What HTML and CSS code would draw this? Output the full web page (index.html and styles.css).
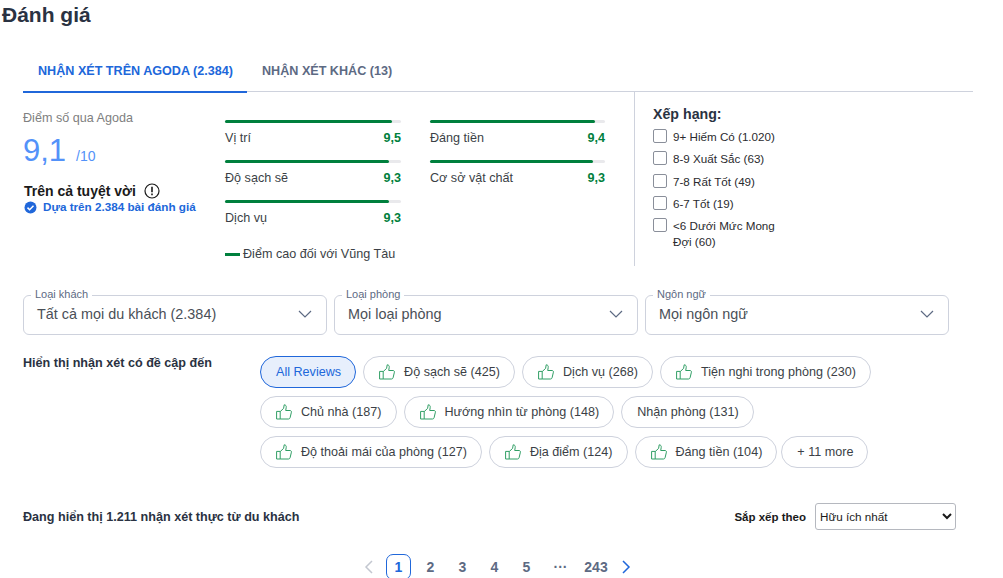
FILE: index.html
```html
<!DOCTYPE html>
<html lang="vi">
<head>
    <meta charset="UTF-8">
    <meta name="viewport" content="width=device-width, initial-scale=1.0">
    <title>Đánh giá</title>
    <link rel="stylesheet" href="styles.css">
</head>
<body>
    <svg class="icon-defs" width="0" height="0">
        <symbol id="thumb" viewBox="0 0 16 16">
            <path d="M.6 7.4h3.6v7.6H.6zM4.2 7.6 7.6 4.4 8.2.8c1.600 0 2.300 1.300 2 2.800L9.700 6.500h4.300c1 0 1.600.8 1.400 1.700l-1.300 5.500c-.2.800-.8 1.300-1.600 1.300H4.200" fill="none" stroke="currentColor" stroke-width="1" stroke-linejoin="round"/>
        </symbol>
        <symbol id="chevron" viewBox="0 0 14 8">
            <path d="M1 1l6 6 6-6" fill="none" stroke="currentColor" stroke-width="1.200"/>
        </symbol>
    </svg>

    <h1 class="page-title">Đánh giá</h1>

    <div class="content">
        <!-- tabs -->
        <div class="tabs">
            <div class="tab active">NHẬN XÉT TRÊN AGODA (2.384)</div>
            <div class="tab">NHẬN XÉT KHÁC (13)</div>
        </div>

        <!-- score summary -->
        <div class="summary">
            <div class="overall">
                <div class="overall-label">Điểm số qua Agoda</div>
                <div class="overall-score">9,1<span class="overall-max">/10</span></div>
                <div class="overall-text">Trên cả tuyệt vời
                    <svg class="info-icon" width="16" height="16" viewBox="0 0 16 16">
                        <circle cx="8" cy="8" r="7" fill="none" stroke="#1a1a1a" stroke-width="1.200"/>
                        <path d="M8 3.800v5.400M8 10.600v1.600" stroke="#1a1a1a" stroke-width="1.600"/>
                    </svg>
                </div>
                <div class="overall-based">
                    <svg width="13" height="13" viewBox="0 0 13 13">
                        <circle cx="6.500" cy="6.500" r="6" fill="#2067da"/>
                        <path d="M3.500 6.600l2.100 2.100 3.900-3.900" fill="none" stroke="#fff" stroke-width="1.500"/>
                    </svg>
                    Dựa trên 2.384 bài đánh giá
                </div>
            </div>

            <div class="bars">
                <div class="bar-col">
                    <div class="bar-item">
                        <div class="bar-track"><div class="bar-fill" style="width: 95%"></div></div>
                        <div class="bar-row"><span>Vị trí</span><span class="bar-value">9,5</span></div>
                    </div>
                    <div class="bar-item">
                        <div class="bar-track"><div class="bar-fill" style="width: 93%"></div></div>
                        <div class="bar-row"><span>Độ sạch sẽ</span><span class="bar-value">9,3</span></div>
                    </div>
                    <div class="bar-item">
                        <div class="bar-track"><div class="bar-fill" style="width: 93%"></div></div>
                        <div class="bar-row"><span>Dịch vụ</span><span class="bar-value">9,3</span></div>
                    </div>
                    <div class="legend"><span class="legend-line"></span>Điểm cao đối với Vũng Tàu</div>
                </div>
                <div class="bar-col">
                    <div class="bar-item">
                        <div class="bar-track"><div class="bar-fill" style="width: 94%"></div></div>
                        <div class="bar-row"><span>Đáng tiền</span><span class="bar-value">9,4</span></div>
                    </div>
                    <div class="bar-item">
                        <div class="bar-track"><div class="bar-fill" style="width: 93%"></div></div>
                        <div class="bar-row"><span>Cơ sở vật chất</span><span class="bar-value">9,3</span></div>
                    </div>
                </div>
            </div>

            <div class="rating-filter">
                <div class="rating-title">Xếp hạng:</div>
                <label class="rating-option"><span class="checkbox"></span><span>9+ Hiếm Có (1.020)</span></label>
                <label class="rating-option"><span class="checkbox"></span><span>8-9 Xuất Sắc (63)</span></label>
                <label class="rating-option"><span class="checkbox"></span><span>7-8 Rất Tốt (49)</span></label>
                <label class="rating-option"><span class="checkbox"></span><span>6-7 Tốt (19)</span></label>
                <label class="rating-option"><span class="checkbox"></span><span>&lt;6 Dưới Mức Mong Đợi (60)</span></label>
            </div>
        </div>

        <!-- dropdown filters -->
        <div class="dropdowns">
            <div class="dropdown">
                <span class="dropdown-label">Loại khách</span>
                <span>Tất cả mọi du khách (2.384)</span>
                <svg class="dropdown-arrow" width="14" height="8"><use href="#chevron"/></svg>
            </div>
            <div class="dropdown">
                <span class="dropdown-label">Loại phòng</span>
                <span>Mọi loại phòng</span>
                <svg class="dropdown-arrow" width="14" height="8"><use href="#chevron"/></svg>
            </div>
            <div class="dropdown">
                <span class="dropdown-label">Ngôn ngữ</span>
                <span>Mọi ngôn ngữ</span>
                <svg class="dropdown-arrow" width="14" height="8"><use href="#chevron"/></svg>
            </div>
        </div>

        <!-- mentions -->
        <div class="mentions">
            <div class="mentions-title">Hiển thị nhận xét có đề cập đến</div>
            <div class="chips">
                <div class="chip selected">All Reviews</div>
                <div class="chip"><svg class="thumb" width="16" height="16"><use href="#thumb"/></svg>Độ sạch sẽ (425)</div>
                <div class="chip"><svg class="thumb" width="16" height="16"><use href="#thumb"/></svg>Dịch vụ (268)</div>
                <div class="chip"><svg class="thumb" width="16" height="16"><use href="#thumb"/></svg>Tiện nghi trong phòng (230)</div>
                <div class="chip"><svg class="thumb" width="16" height="16"><use href="#thumb"/></svg>Chủ nhà (187)</div>
                <div class="chip"><svg class="thumb" width="16" height="16"><use href="#thumb"/></svg>Hướng nhìn từ phòng (148)</div>
                <div class="chip">Nhận phòng (131)</div>
                <div class="chip"><svg class="thumb" width="16" height="16"><use href="#thumb"/></svg>Độ thoải mái của phòng (127)</div>
                <div class="chip"><svg class="thumb" width="16" height="16"><use href="#thumb"/></svg>Địa điểm (124)</div>
                <div class="chip"><svg class="thumb" width="16" height="16"><use href="#thumb"/></svg>Đáng tiền (104)</div>
                <div class="chip more">+ 11 more</div>
            </div>
        </div>

        <!-- count and sort -->
        <div class="result-bar">
            <div class="result-count">Đang hiển thị 1.211 nhận xét thực từ du khách</div>
            <div class="sort">
                <span class="sort-label">Sắp xếp theo</span>
                <select class="sort-select">
                    <option>Hữu ích nhất</option>
                </select>
            </div>
        </div>

        <!-- pagination -->
        <div class="pagination">
            <svg class="page-arrow prev" width="9" height="14" viewBox="0 0 9 14"><path d="M8 1L2 7l6 6" fill="none" stroke="#c3c7d0" stroke-width="1.500"/></svg>
            <span class="page current">1</span>
            <span class="page">2</span>
            <span class="page">3</span>
            <span class="page">4</span>
            <span class="page">5</span>
            <span class="page dots">···</span>
            <span class="page wide">243</span>
            <svg class="page-arrow next" width="9" height="14" viewBox="0 0 9 14"><path d="M1 1l6 6-6 6" fill="none" stroke="#2067da" stroke-width="1.500"/></svg>
        </div>
    </div>
</body>
</html>
```

FILE: styles.css
```css
/* base */
html, body {
    height: 100%;
    overflow: hidden;
}
body {
    margin: 0;
    background: #fff;
    color: #2a2a2e;
    font-family: 'Liberation Sans', Arial, sans-serif;
    font-size: 12.6px;
}
.icon-defs {
    position: absolute;
}
.page-title {
    margin: 0;
    padding: 3px 0 0 2px;
    height: 29px;
    font-size: 21px;
    line-height: 24px;
    font-weight: bold;
    color: #2a3242;
}
.content {
    padding: 15px 30px 0 23px;
}

/* tabs */
.tabs {
    display: flex;
    height: 44px;
    border-bottom: 1px solid #ced2dd;
}
.tab {
    padding: 0 15px;
    line-height: 48px;
    font-weight: bold;
    color: #5d6a83;
}
.tab.active {
    color: #2067da;
    height: 44px;
    padding-right: 14px;
    border-bottom: 2px solid #2067da;
}

/* summary */
.summary {
    display: flex;
    height: 174px;
}
.overall {
    width: 202px;
    padding-top: 18px;
}
.overall-label {
    color: #808080;
    line-height: 16px;
}
.overall-score {
    margin-top: 6px;
    height: 38px;
    font-size: 31px;
    line-height: 38px;
    color: #5392f9;
}
.overall-max {
    margin-left: 10px;
    font-size: 14px;
}
.overall-text {
    display: flex;
    align-items: center;
    gap: 8px;
    margin-top: 13px;
    height: 16px;
    font-size: 14px;
    font-weight: bold;
    color: #1a1a1a;
    padding-left: 1px;
}
.overall-based {
    display: flex;
    align-items: center;
    gap: 6px;
    margin: 0 0 0 1px;
    font-size: 11.7px;
    line-height: 16px;
    font-weight: bold;
    color: #2067da;
}

/* bars */
.bars {
    display: flex;
    gap: 29px;
    width: 410px;
    padding-top: 28px;
    border-right: 1px solid #ced2dd;
    box-sizing: border-box;
}
.bar-col {
    width: 176px;
}
.bar-col + .bar-col {
    width: 175px;
}
.bar-item {
    height: 40px;
}
.bar-track {
    height: 3px;
    background: #e9e9ec;
    border-radius: 2px;
}
.bar-fill {
    height: 3px;
    background: #00803d;
    border-radius: 2px;
}
.bar-row {
    display: flex;
    justify-content: space-between;
    margin-top: 7px;
    line-height: 16px;
    color: #3b3f46;
}
.bar-value {
    font-weight: bold;
    color: #00803d;
}
.legend {
    display: flex;
    align-items: center;
    gap: 3px;
    margin-top: 6px;
    line-height: 16px;
    color: #3b3f46;
}
.legend-line {
    width: 15px;
    height: 3px;
    background: #00803d;
}

/* rating */
.rating-filter {
    padding: 14px 0 0 18px;
    width: 130px;
}
.rating-title {
    font-size: 14.2px;
    font-weight: bold;
    line-height: 16px;
    color: #2a3242;
    margin-bottom: 7px;
}
.rating-option {
    display: flex;
    gap: 6px;
    font-size: 11.65px;
    line-height: 16px;
    color: #2a2a2e;
    margin-bottom: 6.25px;
}
.checkbox {
    flex: none;
    width: 12px;
    height: 12px;
    border: 1px solid #8a8f9a;
    border-radius: 2px;
}

/* dropdowns */
.dropdowns {
    display: flex;
    gap: 7px;
    margin-top: 29px;
}
.dropdown {
    position: relative;
    display: flex;
    align-items: center;
    justify-content: space-between;
    box-sizing: border-box;
    width: 304px;
    height: 40px;
    padding: 0 14px 3px 13px;
    border: 1px solid #ced2dd;
    border-radius: 6px;
    font-size: 14.4px;
    color: #4a4f57;
}
.dropdown-label {
    position: absolute;
    top: -8px;
    left: 7px;
    padding: 0 4px;
    background: #fff;
    font-size: 11px;
    line-height: 13px;
    color: #5d6a83;
}
.dropdown-arrow {
    color: #5d6a83;
}

/* mentions */
.mentions {
    display: flex;
    margin-top: 21px;
}
.mentions-title {
    width: 237px;
    flex: none;
    line-height: 16px;
    font-weight: bold;
    color: #2a3242;
    margin-top: -1px;
}
.chips {
    display: flex;
    flex-wrap: wrap;
    gap: 8px 7px;
    width: 660px;
}
.chip {
    display: flex;
    align-items: center;
    gap: 9px;
    box-sizing: border-box;
    height: 32px;
    padding: 0 14px 0 15px;
    border: 1px solid #ced2dd;
    border-radius: 16px;
    color: #3b3f46;
}
.chip.selected {
    border-color: #2067da;
    background: #e7effc;
    color: #2067da;
}
.chip.more {
    margin-left: -3px;
}
.thumb {
    color: #2f9e64;
}

/* count and sort */
.result-bar {
    display: flex;
    justify-content: space-between;
    align-items: center;
    width: 933px;
    margin-top: 35px;
    height: 27px;
}
.result-count {
    font-weight: bold;
    color: #2a3242;
}
.sort {
    display: flex;
    align-items: center;
    gap: 9px;
}
.sort-label {
    font-size: 11.5px;
    font-weight: bold;
    color: #1a1a1a;
}
.sort-select {
    width: 141px;
    height: 27px;
    padding: 0;
    font-family: 'Liberation Sans', Arial, sans-serif;
    font-size: 11.7px;
    color: #1a1a1a;
    background: #fff;
    border: 1px solid #b5b8bf;
    border-radius: 3px;
}

/* pagination */
.pagination {
    display: flex;
    align-items: center;
    justify-content: center;
    width: 933px;
    height: 26px;
    margin-top: 24px;
    padding-left: 16px;
    box-sizing: border-box;
    gap: 7px;
    font-size: 14px;
    font-weight: bold;
    color: #5d6a83;
}
.page {
    width: 25px;
    height: 26px;
    box-sizing: border-box;
    text-align: center;
    line-height: 26px;
}
.page.current {
    margin-left: 6px;
    border: 1px solid #2067da;
    border-radius: 7px;
    line-height: 24px;
    color: #2067da;
}
.page.dots {
    margin-left: 2px;
}
.page.wide {
    width: 28px;
    margin-left: 2px;
}
.page-arrow.next {
    margin-left: 5px;
}
```
